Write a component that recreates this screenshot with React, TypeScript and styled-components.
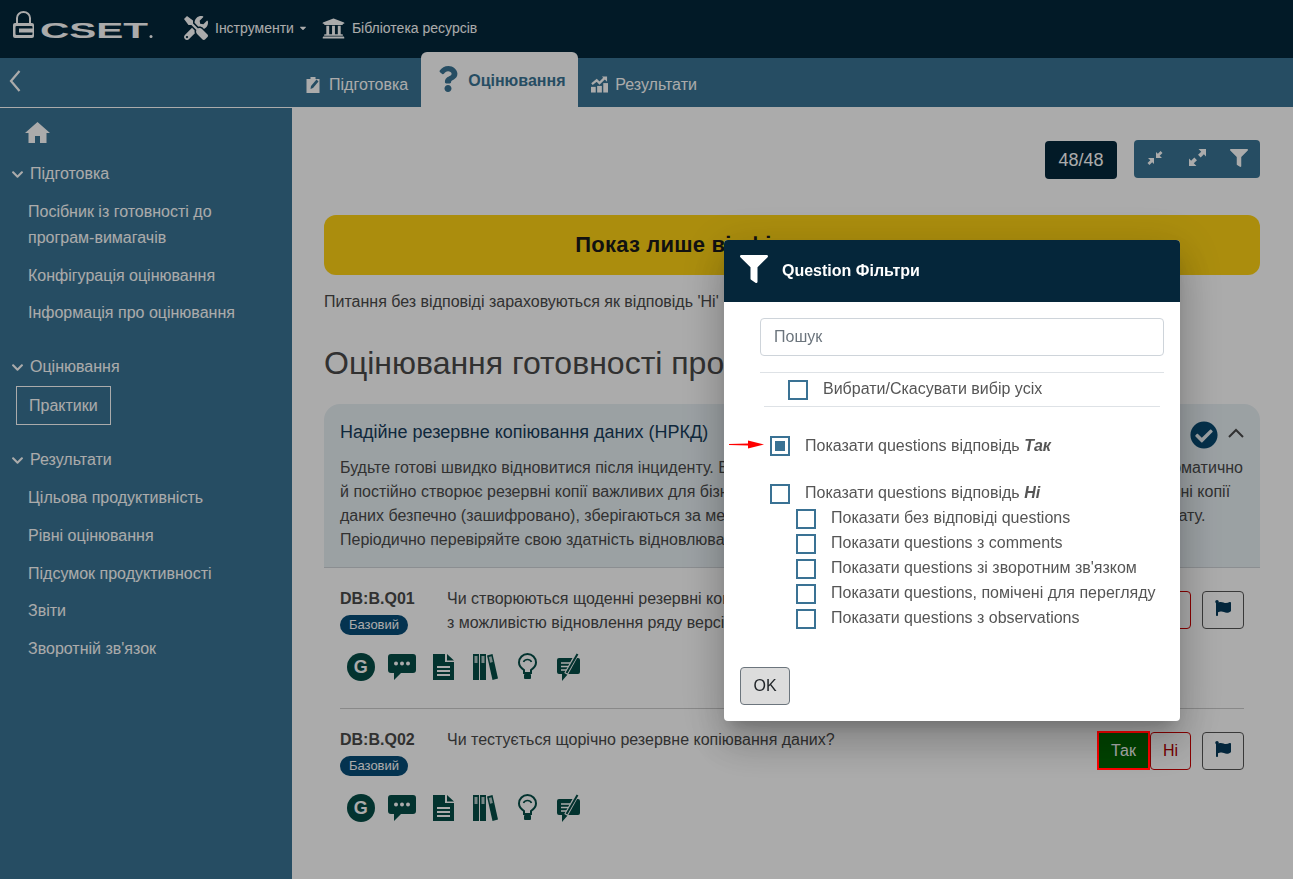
import React from 'react';
import styled, { createGlobalStyle } from 'styled-components';
import { FaTools, FaUniversity, FaQuestion, FaFilter, FaFlag, FaCheckCircle, FaChevronDown, FaCaretDown } from 'react-icons/fa';

const GlobalStyle = createGlobalStyle`
    html, body {
        margin: 0;
        height: 100%;
        overflow: hidden;
        background: #fff;
        font-family: "Liberation Sans", Arial, sans-serif;
        font-size: 16px;
        color: #4a4a4a;
    }
    * { box-sizing: border-box; }
`;

const Logo = () => (
    <LogoSvg viewBox="0 0 142 30" width="142" height="30">
        <path d="M4 14 V8 a6.5 6 0 0 1 13 0 V14" fill="none" stroke="#fff" strokeWidth="2" />
        <rect x="0" y="13" width="21" height="15" rx="2" fill="#fff" />
        <rect x="2.5" y="16" width="17" height="9" rx="1" fill="#03273b" />
        <rect x="6" y="18.5" width="14" height="4" fill="#fff" />
        <text x="27" y="28" fontFamily="Liberation Sans" fontWeight="700" fontSize="22" fill="#fff" textLength="108" lengthAdjust="spacingAndGlyphs">CSET</text>
        <circle cx="138" cy="26.5" r="1.5" fill="#fff" />
    </LogoSvg>
);

const BackIcon = () => (
    <svg viewBox="0 0 12 24" width="12" height="24" fill="none" stroke="#fff" strokeWidth="2.2">
        <path d="M10.5 2 L2 12 L10.5 22" />
    </svg>
);

const HomeIcon = () => (
    <svg viewBox="0 0 25 21" width="25" height="21" fill="#fff">
        <path d="M12.5 0 L25 11 H21.5 V21 H15 V14 H10 V21 H3.5 V11 H0 Z" />
    </svg>
);

const PrepIcon = () => (
    <svg viewBox="0 0 16 18" width="17" height="18">
        <path d="M1 3 H5 V1 H10 V3 H14 V17 H1 Z" fill="#fff" />
        <path d="M5 13 L5.5 10 L11 3.5 L13 5.5 L7.5 12 Z" fill="#3a7494" />
    </svg>
);

const ResultsIcon = () => (
    <svg viewBox="0 0 18 17" width="17" height="17">
        <rect x="0" y="11" width="5" height="6" fill="#fff" />
        <rect x="6.5" y="10" width="5" height="7" fill="#fff" />
        <rect x="13" y="7" width="5" height="10" fill="#fff" />
        <path d="M1 8 L6 4 L9 7 L14 2" fill="none" stroke="#fff" strokeWidth="2.4" />
        <path d="M11.5 0 H17 V5.5 Z" fill="#fff" />
    </svg>
);

const CompressIcon = () => (
    <svg viewBox="0 0 16 16" width="16" height="16" fill="#fff">
        <path d="M9 8 V2 L10.8 3.8 L13.6 1 L15.5 2.9 L12.7 5.7 L15 8 Z" />
        <path d="M7 8 V14 L5.2 12.2 L2.4 15 L0.5 13.1 L3.3 10.3 L1 8 Z" />
    </svg>
);

const ExpandIcon = () => (
    <svg viewBox="0 0 16 16" width="17" height="17" fill="#fff">
        <path d="M16 0 V7 L14 5 L11 8 L8.5 5.5 L11.5 2.5 L9 0 Z" />
        <path d="M0 16 V9 L2 11 L5 8 L7.5 10.5 L4.5 13.5 L7 16 Z" />
    </svg>
);

const UpIcon = () => (
    <UpSvg viewBox="0 0 16 10" width="16" height="10" fill="none" stroke="#4a4a4a" strokeWidth="2">
        <path d="M1 9 L8 2 L15 9" />
    </UpSvg>
);

const ChatIcon = () => (
    <svg viewBox="0 0 28 26" width="28" height="26">
        <path d="M3 0 H25 a3 3 0 0 1 3 3 V16 a3 3 0 0 1 -3 3 H13 L6 26 V19 H3 a3 3 0 0 1 -3 -3 V3 a3 3 0 0 1 3 -3 Z" fill="#054d47" />
        <circle cx="8" cy="9.5" r="2" fill="#fff" />
        <circle cx="14" cy="9.5" r="2" fill="#fff" />
        <circle cx="20" cy="9.5" r="2" fill="#fff" />
    </svg>
);

const DocIcon = () => (
    <svg viewBox="0 0 21 26" width="21" height="26">
        <path d="M0 0 H12 V8 H21 V26 H0 Z" fill="#054d47" />
        <path d="M14 0 L21 6.5 H14 Z" fill="#054d47" />
        <rect x="4" y="12" width="13" height="2" fill="#fff" />
        <rect x="4" y="16" width="13" height="2" fill="#fff" />
        <rect x="4" y="20" width="13" height="2" fill="#fff" />
    </svg>
);

const BooksIcon = () => (
    <svg viewBox="0 0 25 26" width="25" height="26">
        <rect x="0" y="0" width="6" height="26" fill="#054d47" />
        <rect x="7" y="0" width="6" height="26" fill="#054d47" />
        <path d="M14 1.5 L19.5 0 L25 24.5 L19.5 26 Z" fill="#054d47" />
        <rect x="1.5" y="2" width="3" height="7" fill="#fff" opacity="0.7" />
        <rect x="8.5" y="2" width="3" height="7" fill="#fff" opacity="0.7" />
        <path d="M15.8 3 L18.5 2.3 L19.8 8 L17.1 8.7 Z" fill="#fff" opacity="0.7" />
    </svg>
);

const BulbIcon = () => (
    <svg viewBox="0 0 19 28" width="19" height="28" fill="none" stroke="#054d47">
        <path d="M6 20 V17 C3 15 1 13 1 9.5 a8.5 8.5 0 0 1 17 0 C18 13 16 15 13 17 V20 Z" strokeWidth="2" />
        <path d="M5.5 9 a4.5 4.5 0 0 1 8 0" strokeWidth="1.6" />
        <rect x="6" y="21" width="7" height="5" rx="1" fill="#054d47" stroke="none" />
    </svg>
);

const NoteIcon = () => (
    <svg viewBox="0 0 23 28" width="23" height="28">
        <path d="M2 5 H21 a2 2 0 0 1 2 2 V19 a2 2 0 0 1 -2 2 H11 L5 28 V21 H2 a2 2 0 0 1 -2 -2 V7 a2 2 0 0 1 2 -2 Z" fill="#054d47" />
        <path d="M4 10 H13 M4 13.5 H12 M4 17 H10" stroke="#fff" strokeWidth="1.4" />
        <path d="M9 21 L20 1" stroke="#fff" strokeWidth="4" />
        <path d="M9.5 20 L20.5 1" stroke="#054d47" strokeWidth="2" />
    </svg>
);

const QuestionRow: React.FC<{ id: string; lines: string[]; last?: boolean }> = ({ id, lines, last }) => (
    <Question $last={last}>
        <QuestionTop>
            <QuestionId>
                <strong>{id}</strong>
                <Badge>Базовий</Badge>
            </QuestionId>
            <QuestionText>
                {lines.map(l => <div key={l}>{l}</div>)}
            </QuestionText>
            <Answers>
                <YesButton>Так</YesButton>
                <NoButton>Ні</NoButton>
                <FlagButton><FaFlag size={16} /></FlagButton>
            </Answers>
        </QuestionTop>
        <ToolIcons>
            <ToolCell><GBadge>G</GBadge></ToolCell>
            <ToolCell><ChatIcon /></ToolCell>
            <ToolCell><DocIcon /></ToolCell>
            <ToolCell><BooksIcon /></ToolCell>
            <ToolCell><BulbIcon /></ToolCell>
            <ToolCell><NoteIcon /></ToolCell>
        </ToolIcons>
    </Question>
);

const Filter: React.FC<{ label: React.ReactNode; checked?: boolean }> = ({ label, checked }) => (
    <FilterLabel>
        <Check>{checked && <CheckDot />}</Check>
        <span>{label}</span>
    </FilterLabel>
);

export default function App() {
    return (
        <>
            <GlobalStyle />
            <TopBar>
                <Logo />
                <TopLink $ml={29}><FaTools size={24} />Інструменти<FaCaretDown size={10} /></TopLink>
                <TopLink $ml={14}><FaUniversity size={23} />Бібліотека ресурсів</TopLink>
            </TopBar>
            <TabBar>
                <Back><BackIcon /></Back>
                <Tab><PrepIcon />Підготовка</Tab>
                <ActiveTab><FaQuestion size={26} />Оцінювання</ActiveTab>
                <Tab><ResultsIcon />Результати</Tab>
            </TabBar>
            <Layout>
                <Sidebar>
                    <HomeLink><HomeIcon /></HomeLink>
                    <SectionTitle><FaChevronDown size={13} />Підготовка</SectionTitle>
                    <NavItem>Посібник із готовності до програм-вимагачів</NavItem>
                    <NavItem>Конфігурація оцінювання</NavItem>
                    <NavItem>Інформація про оцінювання</NavItem>
                    <SectionTitle $gap><FaChevronDown size={13} />Оцінювання</SectionTitle>
                    <CurrentItem>Практики</CurrentItem>
                    <SectionTitle $gap><FaChevronDown size={13} />Результати</SectionTitle>
                    <NavItem>Цільова продуктивність</NavItem>
                    <NavItem>Рівні оцінювання</NavItem>
                    <NavItem>Підсумок продуктивності</NavItem>
                    <NavItem>Звіти</NavItem>
                    <NavItem>Зворотній зв'язок</NavItem>
                </Sidebar>
                <Main>
                    <Toolbar>
                        <Counter>48/48</Counter>
                        <ButtonGroup>
                            <GroupButton><CompressIcon /></GroupButton>
                            <GroupButton><ExpandIcon /></GroupButton>
                            <GroupButton><FaFilter size={18} /></GroupButton>
                        </ButtonGroup>
                    </Toolbar>
                    <Banner>Показ лише відфільтрованих запитань</Banner>
                    <Note>Питання без відповіді зараховуються як відповідь 'Ні'</Note>
                    <Title>Оцінювання готовності програм-вимагачів</Title>
                    <Accordion>
                        <AccordionHead>
                            <AccordionTitle>Надійне резервне копіювання даних (НРКД)</AccordionTitle>
                            <DoneIcon size={28} />
                            <UpIcon />
                        </AccordionHead>
                        <Desc>Будьте готові швидко відновитися після інциденту. Впровадьте рішення для резервного копіювання, яке вже автоматично</Desc>
                        <Desc>й постійно створює резервні копії важливих для бізнесу даних. Переконайтеся, щоб всі створені локальні резервні копії</Desc>
                        <Desc>даних безпечно (зашифровано), зберігаються за межами мережі та у незмінному чи в іншому захищеному формату.</Desc>
                        <Desc>Періодично перевіряйте свою здатність відновлювати дані з резервних копій.</Desc>
                    </Accordion>
                    <QuestionRow id="DB:B.Q01" lines={['Чи створюються щоденні резервні копії важливих даних', 'з можливістю відновлення ряду версій?']} />
                    <QuestionRow id="DB:B.Q02" lines={['Чи тестується щорічно резервне копіювання даних?']} last />
                </Main>
            </Layout>
            <Backdrop />
            <AnswerHighlight />
            <Modal>
                <ModalHead>
                    <FaFilter size={28} color="#fff" />
                    <ModalTitle>Question Фільтри</ModalTitle>
                </ModalHead>
                <ModalBody>
                    <Search placeholder="Пошук" />
                    <SelectAll>
                        <Filter label="Вибрати/Скасувати вибір усіх" />
                    </SelectAll>
                    <YesFilter>
                        <ArrowMark viewBox="0 0 35 9" width="35" height="9">
                            <path d="M0 4 L19 3.5 V0.5 L35 4.5 L19 8.5 V5.5 L0 5 Z" fill="#f00" />
                        </ArrowMark>
                        <Filter checked label={<>Показати questions відповідь <b><i>Так</i></b></>} />
                    </YesFilter>
                    <NoFilter>
                        <Filter label={<>Показати questions відповідь <b><i>Ні</i></b></>} />
                    </NoFilter>
                    <SubFilters>
                        <Filter label="Показати без відповіді questions" />
                        <Filter label="Показати questions з comments" />
                        <Filter label="Показати questions зі зворотним зв'язком" />
                        <Filter label="Показати questions, помічені для перегляду" />
                        <Filter label="Показати questions з observations" />
                    </SubFilters>
                </ModalBody>
                <ModalFoot>
                    <OkButton>OK</OkButton>
                </ModalFoot>
            </Modal>
        </>
    );
}

const TopBar = styled.div`
    height: 58px;
    background: #03273b;
    display: flex;
    align-items: center;
    padding: 0 0 2px 13px;
`;
const LogoSvg = styled.svg`
    flex: none;
    margin-top: -6px;
    overflow: visible;
`;
const TopLink = styled.div<{ $ml: number }>`
    margin-left: ${p => p.$ml}px;
    display: flex;
    align-items: center;
    gap: 7px;
    color: #fff;
    font-size: 14px;
    svg:last-child:not(:first-child) {
        margin-left: -3px;
    }
`;

const TabBar = styled.div`
    height: 50px;
    background: #3a7494;
    border-bottom: 1px solid #fff;
    display: flex;
    align-items: flex-end;
    position: relative;
    padding-left: 292px;
`;
const Back = styled.div`
    position: absolute;
    left: 9px;
    top: 11px;
`;
const Tab = styled.div`
    height: 49px;
    display: flex;
    align-items: center;
    gap: 7px;
    padding: 4px 13px 0 13px;
    color: #fff;
    svg {
        flex: none;
    }
`;
const ActiveTab = styled.div`
    height: 56px;
    margin-bottom: -1px;
    width: 157px;
    background: #fff;
    border-radius: 6px 6px 0 0;
    display: flex;
    align-items: center;
    gap: 7px;
    padding: 1px 0 0 14px;
    color: #3a7494;
    font-weight: 700;
    svg {
        flex: none;
        margin-top: -4px;
    }
`;

const Layout = styled.div`
    display: flex;
    height: 771px;
`;
const Sidebar = styled.nav`
    width: 292px;
    flex: none;
    background: #3a7494;
    color: #fff;
    padding-top: 14px;
`;
const HomeLink = styled.div`
    height: 20px;
    padding-left: 25px;
    display: flex;
    align-items: center;
    margin-bottom: 19px;
`;
const SectionTitle = styled.div<{ $gap?: boolean }>`
    display: flex;
    align-items: center;
    gap: 6px;
    padding-left: 11px;
    height: 26px;
    margin-top: ${p => (p.$gap ? '22px' : '0')};
    margin-bottom: 6px;
`;
const NavItem = styled.div`
    padding: 6px 40px 6px 28px;
    line-height: 25.75px;
`;
const CurrentItem = styled.div`
    margin: 0 0 0 16px;
    width: 95px;
    height: 39px;
    line-height: 37px;
    padding-left: 12px;
    border: 1px solid #fff;
`;

const Main = styled.main`
    flex: 1;
    min-width: 0;
    padding: 32px 33px 0 32px;
`;
const Toolbar = styled.div`
    display: flex;
    justify-content: flex-end;
    align-items: flex-start;
    gap: 17px;
`;
const Counter = styled.div`
    margin-top: 1px;
    width: 72px;
    height: 38px;
    border-radius: 4px;
    background: #03273b;
    color: #fff;
    font-size: 18px;
    display: flex;
    align-items: center;
    justify-content: center;
`;
const ButtonGroup = styled.div`
    display: flex;
    height: 38px;
    border-radius: 4px;
    overflow: hidden;
    background: #3a7494;
`;
const GroupButton = styled.div`
    width: 42px;
    display: flex;
    align-items: center;
    justify-content: center;
    color: #fff;
    padding-bottom: 3px;
`;
const Banner = styled.div`
    margin-top: 36px;
    height: 60px;
    background: #ffd314;
    border-radius: 12px;
    display: flex;
    align-items: center;
    justify-content: center;
    font-size: 22px;
    font-weight: 700;
    letter-spacing: 0.2px;
    color: #1a1a1a;
`;
const Note = styled.div`
    margin-top: 15px;
    line-height: 24px;
`;
const Title = styled.h1`
    margin: 30px 0 0;
    font-size: 32px;
    font-weight: 400;
    line-height: 38px;
    white-space: nowrap;
`;
const Accordion = styled.section`
    margin-top: 22px;
    height: 164px;
    background: #e8f0f4;
    border-radius: 16px 16px 0 0;
    border-bottom: 1px solid #d0d4d8;
    padding: 16px 16px 0;
`;
const AccordionHead = styled.div`
    display: flex;
    align-items: center;
    height: 24px;
    margin-bottom: 12px;
`;
const AccordionTitle = styled.div`
    flex: 1;
    font-size: 18px;
    color: #173c5a;
`;
const DoneIcon = styled(FaCheckCircle)`
    color: #07486f;
    margin-top: 6px;
`;
const UpSvg = styled.svg`
    margin-left: 10px;
    margin-top: 2px;
    flex: none;
`;
const Desc = styled.div`
    line-height: 24px;
    white-space: nowrap;
`;

const Question = styled.div<{ $last?: boolean }>`
    margin: 0 16px;
    height: 141px;
    padding-top: 19px;
    border-bottom: ${p => (p.$last ? 'none' : '1px solid #ccc')};
`;
const QuestionTop = styled.div`
    display: flex;
    height: 66px;
`;
const QuestionId = styled.div`
    width: 107px;
    flex: none;
    line-height: 24px;
`;
const Badge = styled.div`
    width: 68px;
    height: 20px;
    margin-top: 4px;
    border-radius: 10px;
    background: #074d78;
    color: #fff;
    font-size: 13px;
    display: flex;
    align-items: center;
    justify-content: center;
`;
const QuestionText = styled.div`
    flex: 1;
    line-height: 24px;
    white-space: nowrap;
`;
const Answers = styled.div`
    display: flex;
    align-items: flex-start;
    margin-top: 3px;
`;
const YesButton = styled.div`
    width: 53px;
    height: 39px;
    background: #006400;
    color: #fff;
    display: flex;
    align-items: center;
    justify-content: center;
`;
const NoButton = styled.div`
    width: 41px;
    height: 38px;
    margin-top: 1px;
    margin-right: 11px;
    border: 1px solid #c00;
    border-radius: 4px;
    color: #b00000;
    display: flex;
    align-items: center;
    justify-content: center;
`;
const FlagButton = styled.div`
    width: 42px;
    height: 38px;
    margin-top: 1px;
    border: 1px solid #555;
    border-radius: 4px;
    color: #053a5a;
    display: flex;
    align-items: center;
    justify-content: center;
    padding-bottom: 4px;
`;
const ToolIcons = styled.div`
    display: flex;
`;
const ToolCell = styled.div`
    width: 41.6px;
    height: 28px;
    display: flex;
    align-items: center;
    justify-content: center;
`;
const GBadge = styled.div`
    width: 28px;
    height: 28px;
    border-radius: 50%;
    background: #054d47;
    color: #fff;
    font-weight: 700;
    font-size: 18px;
    display: flex;
    align-items: center;
    justify-content: center;
`;

const Backdrop = styled.div`
    position: fixed;
    inset: 0;
    background: rgba(0, 0, 0, 0.33);
`;
const AnswerHighlight = styled.div`
    position: fixed;
    left: 1097px;
    top: 731px;
    width: 53px;
    height: 39px;
    border: 2px solid #f00;
`;
const Modal = styled.div`
    position: fixed;
    left: 724px;
    top: 240px;
    width: 456px;
    height: 481px;
    background: #fff;
    border-radius: 4px;
    overflow: hidden;
    box-shadow: 0 11px 15px -7px rgba(0, 0, 0, 0.2), 0 24px 38px 3px rgba(0, 0, 0, 0.14), 0 9px 46px 8px rgba(0, 0, 0, 0.12);
    display: flex;
    flex-direction: column;
`;
const ModalHead = styled.div`
    height: 62px;
    flex: none;
    background: #05263a;
    display: flex;
    align-items: center;
    padding: 0 0 4px 16px;
    gap: 14px;
`;
const ModalTitle = styled.div`
    color: #fff;
    font-size: 16px;
    font-weight: 700;
    margin-top: 4px;
    white-space: nowrap;
`;
const ModalBody = styled.div`
    flex: 1;
    padding: 16px 16px 0 36px;
    color: #555;
`;
const Search = styled.input`
    display: block;
    width: 404px;
    height: 38px;
    border: 1px solid #ced4da;
    border-radius: 4px;
    padding: 0 13px;
    font: inherit;
    &::placeholder {
        color: #6c757d;
    }
`;
const SelectAll = styled.div`
    margin-top: 16px;
    height: 35px;
    border-top: 1px solid #dee2e6;
    padding: 7px 0 0 28px;
    position: relative;
    &::after {
        content: '';
        position: absolute;
        left: 4px;
        right: 4px;
        bottom: 0;
        border-bottom: 1px solid #dee2e6;
    }
`;
const FilterLabel = styled.label`
    display: flex;
    align-items: center;
    gap: 15px;
    height: 20px;
    line-height: 20px;
    white-space: nowrap;
    span:last-child {
        padding-bottom: 2px;
    }
`;
const Check = styled.span`
    width: 20px;
    height: 20px;
    flex: none;
    border: 2px solid #3a7294;
    display: flex;
    align-items: center;
    justify-content: center;
`;
const CheckDot = styled.span`
    width: 10px;
    height: 10px;
    background: #3a7294;
`;
const YesFilter = styled.div`
    margin-top: 29px;
    padding-left: 10px;
    position: relative;
    label span:last-child {
        padding-bottom: 0;
    }
`;
const ArrowMark = styled.svg`
    position: absolute;
    left: -31px;
    top: 4px;
`;
const NoFilter = styled.div`
    margin-top: 28px;
    padding-left: 10px;
`;
const SubFilters = styled.div`
    margin-top: 5px;
    padding-left: 36px;
    display: flex;
    flex-direction: column;
    gap: 5px;
`;
const ModalFoot = styled.div`
    padding: 0 16px 16px;
`;
const OkButton = styled.div`
    width: 50px;
    height: 38px;
    background: #dcdcdc;
    border: 1px solid #6c757d;
    border-radius: 4px;
    color: #212529;
    display: flex;
    align-items: center;
    justify-content: center;
`;
